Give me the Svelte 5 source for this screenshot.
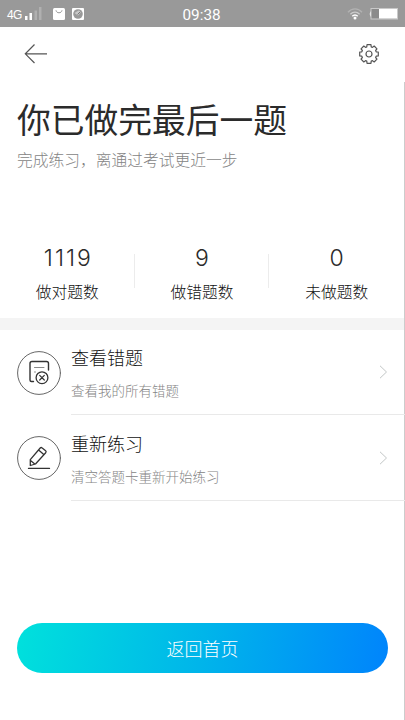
<script>
  const stats = [
    { value: '1119', label: '做对题数' },
    { value: '9', label: '做错题数' },
    { value: '0', label: '未做题数' },
  ];
  const actions = [
    { icon: 'wrong', title: '查看错题', note: '查看我的所有错题' },
    { icon: 'redo', title: '重新练习', note: '清空答题卡重新开始练习' },
  ];
  // Outline of an eight-tooth gear centred on the origin
  const gear = (() => {
    const pts = [];
    for (let i = 0; i < 8; i++) {
      const a = (i * 45 * Math.PI) / 180;
      for (const [d, r] of [[-0.3, 7.5], [-0.21, 9.5], [0.21, 9.5], [0.3, 7.5]]) {
        pts.push(`${(Math.sin(a + d) * r).toFixed(2)},${(-Math.cos(a + d) * r).toFixed(2)}`);
      }
    }
    return pts.join(' ');
  })();
</script>

<div class="screen">
  <div class="status">
    <span class="net">4G</span>
    <svg class="signal" width="17" height="14" viewBox="0 0 17 14">
      <path d="M0 9h2.500v4H0zM4.500 6H7v7H4.500z" fill="#fff" />
      <path d="M9.500 3.500H12V13H9.500zM14 0h2.500v13H14z" fill="#b0b0b0" />
    </svg>
    <svg class="bag" width="12" height="12" viewBox="0 0 12 12">
      <rect width="12" height="12" rx="1.500" fill="#fff" />
      <path d="M3 2.300c.3 3.300 5.700 3.300 6 0" fill="none" stroke="#999" />
    </svg>
    <svg class="ball" width="12" height="12" viewBox="0 0 12 12">
      <rect width="12" height="12" rx="1" fill="#fff" />
      <circle cx="6" cy="6" r="4.800" fill="#999" />
      <path d="M2.500 5l4-2.500 3 1-3.500 4z" fill="#c8c8c8" />
      <path d="M5.500 6.500l3-3" stroke="#777" />
    </svg>
    <time>09:38</time>
    <svg class="wifi" width="16" height="12" viewBox="0 0 16 12" fill="none">
      <path d="M1 4.300C5-.3 11-.3 15 4.300" stroke="#b2b2b2" stroke-width="1.300" />
      <path d="M3.400 6.200c2.700-2.800 6.500-2.800 9.200 0" stroke="#ccc" stroke-width="1.300" />
      <path d="M5.300 8.200c1.600-1.700 3.800-1.700 5.400 0" stroke="#fff" stroke-width="1.500" />
      <circle cx="8" cy="10" r="1.500" fill="#fff" />
    </svg>
    <svg class="battery" width="29" height="12" viewBox="0 0 29 12">
      <path d="M2 3Q-.5 6 2 9z" fill="#fff" />
      <rect x="2" y=".5" width="26.500" height="10.500" fill="#8b8b8b" stroke="#c9c9c9" />
      <rect x="10" y="1" width="18" height="9.500" fill="#fff" />
    </svg>
  </div>

  <div class="page">
    <nav>
      <svg width="24" height="22" viewBox="0 0 24 22" fill="none" stroke="#555" stroke-width="1.200">
        <path d="M10.500 1.500L1.300 10.800l9.200 9.200M1.500 10.800H23" />
      </svg>
      <svg width="22" height="22" viewBox="-11 -11 22 22" fill="none" stroke="#555" stroke-width="1.200" stroke-linejoin="round">
        <polygon points={gear} />
        <circle r="3" />
      </svg>
    </nav>

    <header>
      <h1>你已做完最后一题</h1>
      <p>完成练习，离通过考试更近一步</p>
    </header>

    <section class="stats">
      {#each stats as s}
        <div class="stat"><b>{s.value}</b><span>{s.label}</span></div>
      {/each}
    </section>

    <div class="band"></div>

    {#each actions as a}
      <div class="row">
        <svg width="44" height="44" viewBox="0 0 44 44" fill="none" stroke="#333" stroke-linecap="round" stroke-linejoin="round">
          <circle cx="22" cy="22" r="21.400" stroke="#666" stroke-width="1" />
          {#if a.icon === 'wrong'}
            <path d="M16.500 30.500h-2q-1.500 0-1.500-1.500V12.500q0-2 2-2h14.500q2 0 2 2V19" stroke-width="1.400" />
            <path d="M17.500 16.500h9.500M17.500 21h1" stroke="#888" stroke-width="1" />
            <circle cx="25" cy="26.700" r="5.900" stroke-width="1.300" />
            <path d="M22.700 24.400l4.600 4.600m0-4.600l-4.600 4.600" stroke-width="1.200" />
          {:else}
            <path d="M13.300 23.600L23.200 12q1-1 2 0l3.400 2.800q1 .9.100 1.900L18.500 28l-5.200 1.500zM21.600 14l4.900 4.300M13.500 24.500l4.300 3.400" stroke-width="1.300" />
            <path d="M11.500 32.400h21" stroke-width="1.300" />
          {/if}
        </svg>
        <div class="body">
          <div class="copy"><h2>{a.title}</h2><p>{a.note}</p></div>
          <svg class="chev" width="9" height="14" viewBox="0 0 9 14" fill="none" stroke="#c2c6c6">
            <path d="M1 .8L7.500 7 1 13.200" />
          </svg>
        </div>
      </div>
    {/each}

    <button>返回首页</button>
  </div>
</div>

<style>
  .screen {
    width: 405px;
    height: 720px;
    background: #fff;
    color: #2b2b2b;
    font-family: 'Noto Sans CJK SC', sans-serif;
    overflow: hidden;
  }
  .status {
    box-sizing: border-box;
    height: 27px;
    padding: 0 7px;
    background: #999;
    color: #fff;
    display: grid;
    grid-template-columns: 18px 28px 19px 12px 1fr 22px 29px;
    align-items: center;
    font-family: 'Liberation Sans', sans-serif;
  }
  .net { font-size: 12px; padding-top: 3px; letter-spacing: -0.6px; }
  .signal { margin-top: 1px; }
  time { font: 15.300px/18px Roboto, sans-serif; margin-left: 98.500px; padding-top: 2px; }
  .page {
    box-sizing: border-box;
    height: 693px;
    display: flex;
    flex-direction: column;
    background: linear-gradient(#ccc, #ccc) right 55px / 1px 100% no-repeat;
  }
  nav {
    height: 54px;
    padding: 0 25px 0 24px;
    display: flex;
    align-items: center;
    justify-content: space-between;
  }
  h1, h2, p { margin: 0; font-weight: 400; white-space: nowrap; }
  header { height: 139px; padding: 14px 17px 0; box-sizing: border-box; }
  h1 { font-size: 33.750px; line-height: 48px; font-weight: 400; }
  header p { font-size: 15.750px; line-height: 24px; margin-top: 5px; color: #848484; font-weight: 300; }
  .stats { height: 98px; display: flex; margin-right: 1px; }
  .stat {
    flex: 1;
    display: flex;
    flex-direction: column;
    align-items: center;
    padding-top: 23px;
    background: linear-gradient(#ececec, #ececec) right 34px / 1px 34px no-repeat;
  }
  .stat:last-child { background: none; }
  .stat b { font: 300 23px/30px Inter, sans-serif; letter-spacing: 2px; margin-right: -2px; }
  .stat span { font-size: 15.750px; line-height: 24px; margin-top: 7px; font-weight: 300; color: #111; }
  .band { height: 12px; background: #f4f4f4; margin-right: 1px; }
  .row { display: flex; align-items: center; height: 85px; padding-left: 17px; }
  .row + .row { height: 86px; }
  .row > svg { flex: none; margin-right: 10px; }
  .body {
    flex: 1;
    align-self: stretch;
    box-sizing: border-box;
    border-bottom: 1px solid #e9e9e9;
    display: flex;
    align-items: center;
    justify-content: space-between;
    padding-right: 17px;
  }
  h2 { font-size: 18px; line-height: 27px; font-weight: 300; color: #111; }
  .row p { font-size: 13.500px; line-height: 20px; margin-top: 9px; color: #848484; font-weight: 300; }
  button {
    margin: 122px 17px 0;
    height: 50px;
    flex: none;
    border: 0;
    border-radius: 25px;
    background: linear-gradient(100deg, #00e1dc, #00b5ea 50%, #0084fc);
    color: #fff;
    font: 300 18px/50px 'Noto Sans CJK SC', sans-serif;
    padding: 0;
  }
</style>
